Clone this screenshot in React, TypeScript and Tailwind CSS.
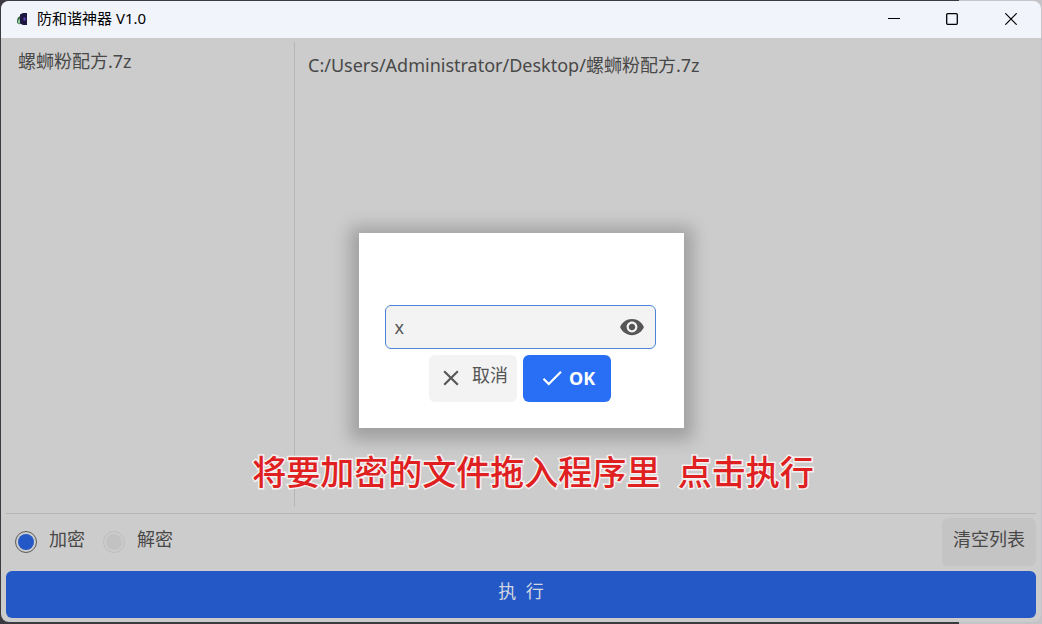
import { useState } from 'react';
import { MdCheck, MdClose, MdVisibility } from 'react-icons/md';

interface FileItem {
    name: string;
    path: string;
}

const files: FileItem[] = [
    { name: '螺蛳粉配方.7z', path: 'C:/Users/Administrator/Desktop/螺蛳粉配方.7z' },
];

const modes = [
    { value: 'encrypt', label: '加密' },
    { value: 'decrypt', label: '解密' },
];

function AppIcon() {
    return (
        <svg width="10" height="12" viewBox="0 0 10 12" aria-hidden="true">
            <path d="M3 1.5 6 0h4v12H6L3 10.5z" fill="#1d1640" />
            <path d="M3 3 1 4.5 0 7v3l3 1.5z" fill="#3f6b4a" />
            <path d="M1 7.5 3 6v4.5L1 10z" fill="#8fd39a" />
            <path d="M6.5 4.5h2v3h-2z" fill="#5b49b8" />
        </svg>
    );
}

function TitleBar() {
    return (
        <header className="flex h-[37px] items-center bg-[#f1f4fa] pb-0.5 pl-4 text-black">
            <AppIcon />
            <h1 className="ml-2.5 flex-1 pb-0.5 text-[15px] leading-5">防和谐神器 V1.0</h1>
            <button type="button" aria-label="最小化" className="flex h-full w-[58px] items-center justify-center">
                <svg width="12" height="12" viewBox="0 0 12 12" fill="none" stroke="currentColor">
                    <path d="M0 5.5h12" />
                </svg>
            </button>
            <button type="button" aria-label="最大化" className="flex h-full w-[58px] items-center justify-center">
                <svg width="12" height="12" viewBox="0 0 12 12" fill="none" stroke="currentColor" strokeWidth="1.3">
                    <rect x="0.7" y="0.7" width="10.6" height="10.6" rx="1" />
                </svg>
            </button>
            <button type="button" aria-label="关闭" className="flex h-full w-[60px] items-center justify-center">
                <svg width="12" height="12" viewBox="0 0 12 12" fill="none" stroke="currentColor" strokeWidth="1.2">
                    <path d="M0.3 0.3l11.4 11.4M11.7 0.3L0.3 11.7" />
                </svg>
            </button>
        </header>
    );
}

function PasswordDialog() {
    const [password, setPassword] = useState('x');

    return (
        <div className="absolute inset-0 flex items-center justify-center">
            <div
                role="dialog"
                aria-label="密码"
                className="flex w-[325px] flex-col items-center bg-white pt-[72px] pr-7 pb-[26px] pl-[26px] shadow-[0_3px_16px_9px_rgba(0,0,0,0.22)]"
            >
                <div className="flex h-11 w-full items-center rounded-md border border-[#4a86d8] bg-[#f3f3f3] pr-2.5 pl-[9px]">
                    <input
                        type="text"
                        aria-label="密码"
                        value={password}
                        onChange={(e) => setPassword(e.target.value)}
                        className="min-w-0 flex-1 bg-transparent text-lg text-[#565656] outline-none"
                    />
                    <button type="button" aria-label="显示密码" className="text-[#565656]">
                        <MdVisibility size={26} />
                    </button>
                </div>
                <div className="mt-1.5 flex gap-1.5">
                    <button
                        type="button"
                        className="flex h-[47px] w-22 items-center justify-center gap-2 rounded-md bg-[#f3f3f3] text-lg text-[#565656]"
                    >
                        <MdClose size={26} />
                        <span className="pb-1.5">取消</span>
                    </button>
                    <button
                        type="button"
                        className="flex h-[47px] w-22 items-center justify-center gap-1 rounded-md bg-[#296ff6] text-lg font-bold text-white"
                    >
                        <MdCheck size={26} />
                        <span>OK</span>
                    </button>
                </div>
            </div>
        </div>
    );
}

function App() {
    const [mode, setMode] = useState('encrypt');

    return (
        <div className="flex min-h-screen bg-linear-to-r from-[#3a3a40] from-92% to-[#c4c4c8] to-92% px-px pt-px pb-0.5 font-['Noto_Sans','Noto_Sans_CJK_SC',sans-serif]">
            <div className="flex flex-1 flex-col overflow-hidden rounded-lg bg-[#cccccc]">
                <TitleBar />
                <div className="relative flex flex-1 flex-col px-[5px] pt-1 pb-1 text-lg text-[#484848]">
                    <main className="flex flex-1">
                        <ul className="mb-1.5 w-[289px] border-r border-[#b6b6b6] px-3 pt-[5px]">
                            {files.map((file) => (
                                <li key={file.path}>{file.name}</li>
                            ))}
                        </ul>
                        <div className="flex-1 px-[13px] pt-[9px]">
                            {files.map((file) => (
                                <p key={file.path}>{file.path}</p>
                            ))}
                        </div>
                    </main>
                    <div className="flex h-[54px] items-center border-t border-[#b6b6b6] pt-1 pb-px">
                        <div className="flex flex-1 gap-[18px] pl-[9px]">
                            {modes.map((m) => (
                                <label key={m.value} className="flex items-center gap-3">
                                    <input
                                        type="radio"
                                        name="mode"
                                        value={m.value}
                                        checked={mode === m.value}
                                        onChange={() => setMode(m.value)}
                                        className="size-[22px] appearance-none rounded-full border border-[#bdbdbd] bg-[#c2c2c2] bg-clip-content p-0.5 checked:border-[#5a5a5a] checked:bg-[#2458c6]"
                                    />
                                    <span className="pb-1.5">{m.label}</span>
                                </label>
                            ))}
                        </div>
                        <button type="button" className="h-12 rounded-md bg-[#c4c4c4] px-[11px] pb-1.5">
                            清空列表
                        </button>
                    </div>
                    <button
                        type="button"
                        className="mt-1 h-[47px] rounded-md bg-[#2458c6] pb-2 whitespace-pre text-[#d2d6e0]"
                    >
                        {'执  行'}
                    </button>
                    <PasswordDialog />
                    <p className="absolute inset-x-0 bottom-[130px] pl-6 text-center text-[34px] leading-10 font-medium whitespace-pre text-[#e02020] [-webkit-text-stroke:3px_#f4f0f0] [paint-order:stroke_fill]">
                        {'将要加密的文件拖入程序里  点击执行'}
                    </p>
                </div>
            </div>
        </div>
    );
}

export default App;
